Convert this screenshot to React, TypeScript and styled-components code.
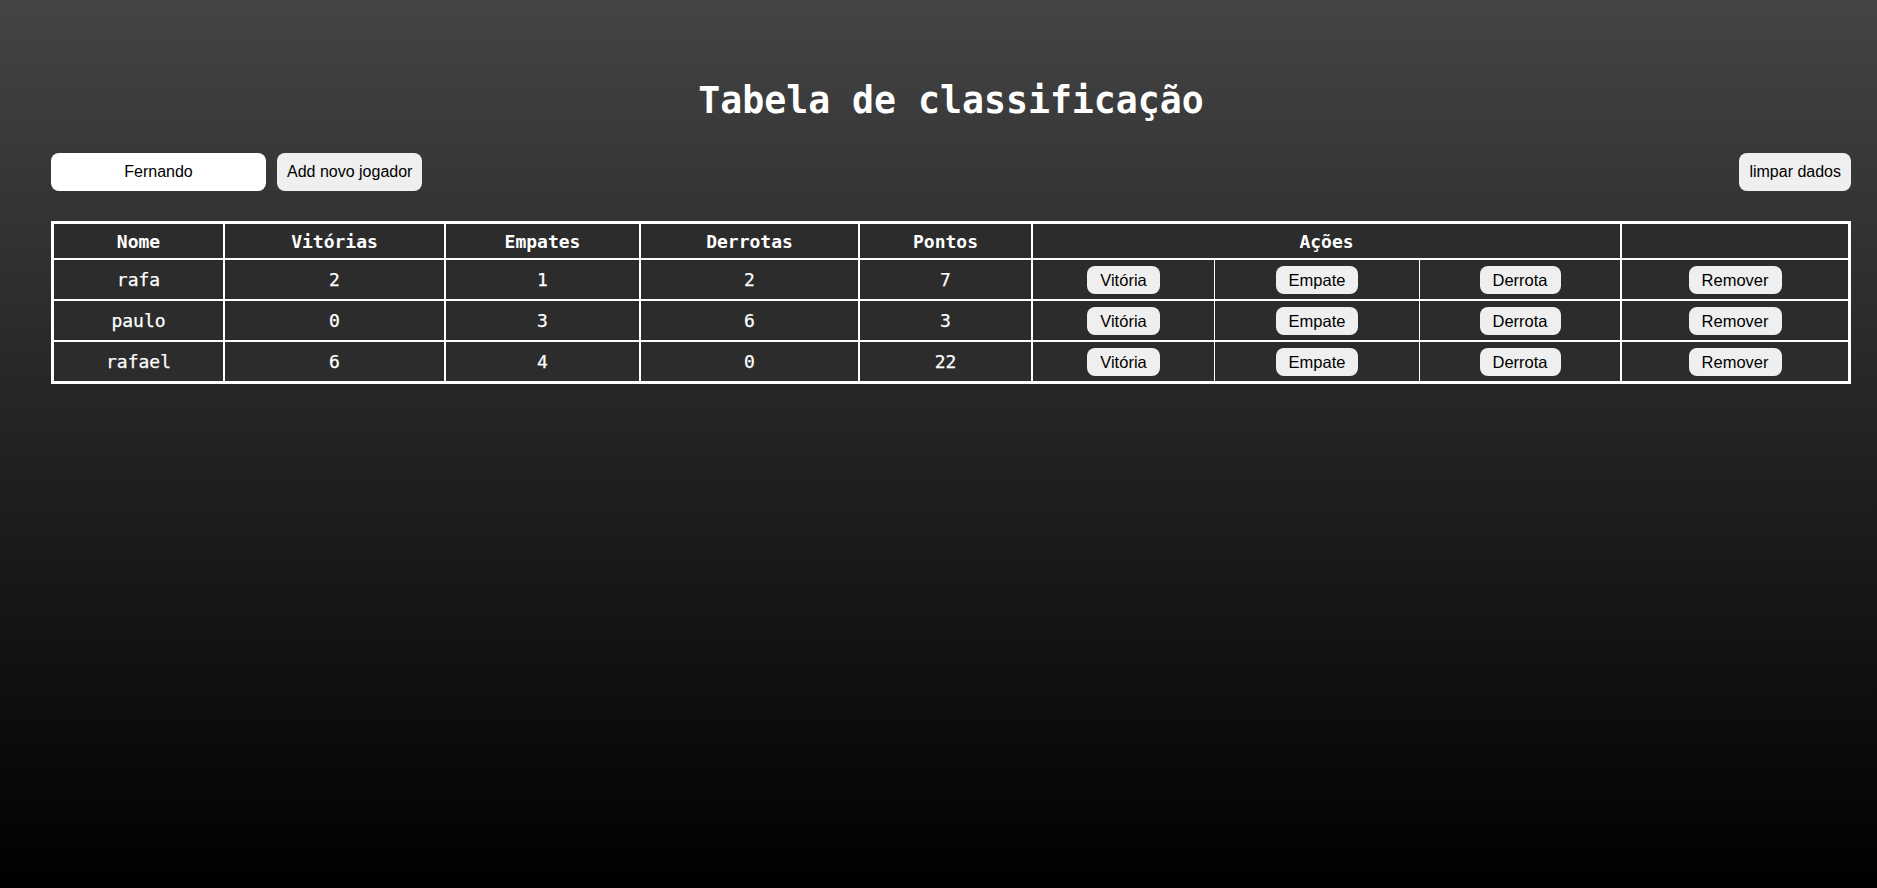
import React from "react";
import styled, { createGlobalStyle } from "styled-components";

const GlobalStyle = createGlobalStyle`
  html, body {
    margin: 0;
    padding: 0;
    min-height: 100%;
  }
  body {
    min-height: 100vh;
    background: linear-gradient(to bottom, #444444 0%, #000000 100%);
    background-attachment: fixed;
    font-family: "Liberation Sans", Arial, sans-serif;
  }
  * { box-sizing: border-box; }
`;

const Page = styled.div`
  min-height: 100vh;
  padding: 79px 26px 0 51px;
`;

const Title = styled.h1`
  margin: 0;
  height: 44px;
  line-height: 44px;
  text-align: center;
  color: #ffffff;
  font-family: "DejaVu Sans Mono", "Liberation Mono", monospace;
  font-weight: bold;
  font-size: 36.5px;
`;

const Toolbar = styled.div`
  margin-top: 30px;
  display: flex;
  justify-content: space-between;
  align-items: center;
`;

const Group = styled.div`
  display: flex;
  gap: 11px;
  align-items: center;
`;

const NameInput = styled.input`
  width: 215px;
  height: 38px;
  border: none;
  border-radius: 8px;
  background: #ffffff;
  color: #000;
  text-align: center;
  font-family: "Liberation Sans", Arial, sans-serif;
  font-size: 16px;
  outline: none;
  padding: 0 8px;
`;

const Button = styled.button<{ $small?: boolean }>`
  height: ${(p) => (p.$small ? "28px" : "38px")};
  padding: 0 ${(p) => (p.$small ? "13px" : "10px")};
  border: none;
  border-radius: 8px;
  background: #efefef;
  color: #000;
  -webkit-text-stroke: 0;
  font-family: "Liberation Sans", Arial, sans-serif;
  font-size: ${(p) => (p.$small ? "16.5px" : "16px")};
  line-height: 18px;
  cursor: pointer;
`;

const Table = styled.table`
  margin-top: 30px;
  width: 100%;
  table-layout: fixed;
  border-collapse: separate;
  border-spacing: 0;
  border: 2px solid #ffffff;
  background: #2c2c2c;
  color: #ffffff;
  font-family: "DejaVu Sans Mono", "Liberation Mono", monospace;
  font-size: 18px;
`;

const Th = styled.th`
  height: 36px;
  padding: 0;
  border: 1px solid #ffffff;
  font-weight: bold;
  text-align: center;
  vertical-align: middle;
`;

const Td = styled.td<{ $join?: "first" | "mid" | "last" }>`
  height: 41px;
  padding: 0;
  border: 1px solid #ffffff;
  ${(p) => (p.$join === "first" || p.$join === "mid" ? "border-right: none;" : "")}
  text-align: center;
  vertical-align: middle;
  font-weight: normal;
  -webkit-text-stroke: 0.25px #ffffff;
`;

const widths = [171, 221, 195, 219, 173, 182, 205, 202, 228];

const players = [
  { nome: "rafa", v: 2, e: 1, d: 2, p: 7 },
  { nome: "paulo", v: 0, e: 3, d: 6, p: 3 },
  { nome: "rafael", v: 6, e: 4, d: 0, p: 22 },
];

export default function App() {
  return (
    <>
      <GlobalStyle />
      <Page>
        <Title>Tabela de classificação</Title>
        <Toolbar>
          <Group>
            <NameInput defaultValue="Fernando" />
            <Button>Add novo jogador</Button>
          </Group>
          <Button>limpar dados</Button>
        </Toolbar>
        <Table>
          <colgroup>
            {widths.map((w, i) => (
              <col key={i} style={{ width: w }} />
            ))}
          </colgroup>
          <thead>
            <tr>
              <Th>Nome</Th>
              <Th>Vitórias</Th>
              <Th>Empates</Th>
              <Th>Derrotas</Th>
              <Th>Pontos</Th>
              <Th colSpan={3}>Ações</Th>
              <Th></Th>
            </tr>
          </thead>
          <tbody>
            {players.map((pl) => (
              <tr key={pl.nome}>
                <Td>{pl.nome}</Td>
                <Td>{pl.v}</Td>
                <Td>{pl.e}</Td>
                <Td>{pl.d}</Td>
                <Td>{pl.p}</Td>
                <Td $join="first">
                  <Button $small>Vitória</Button>
                </Td>
                <Td $join="mid">
                  <Button $small>Empate</Button>
                </Td>
                <Td $join="last">
                  <Button $small>Derrota</Button>
                </Td>
                <Td>
                  <Button $small>Remover</Button>
                </Td>
              </tr>
            ))}
          </tbody>
        </Table>
      </Page>
    </>
  );
}
